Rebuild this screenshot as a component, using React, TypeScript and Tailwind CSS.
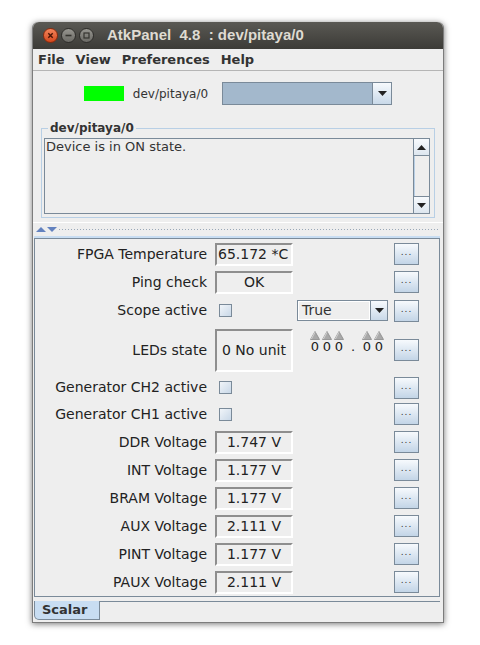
import React from "react";

const DotsButton = () => (
  <div className="w-[25px] h-[22px] border border-[#7a8a99] bg-gradient-to-b from-[#f7fafd] to-[#c3d5e7] flex items-center justify-center">
    <span className="text-[9px] leading-none text-[#333] tracking-[1px] -mt-[3px]">...</span>
  </div>
);

const Check = () => (
  <span className="block w-[13px] h-[13px] border border-[#7a8a99] bg-gradient-to-br from-[#f1f5f9] to-[#c9d8e8]" />
);

const ValueBox = ({
  children,
  align = "center",
  tall = false,
}: {
  children: React.ReactNode;
  align?: "center" | "left";
  tall?: boolean;
}) => (
  <div
    className={`w-[78px] ${tall ? "h-[43px]" : "h-[23px]"} overflow-hidden whitespace-nowrap border-t-2 border-l-2 border-b-2 border-r-2 border-t-[#8e8e8e] border-l-[#8e8e8e] border-b-white border-r-white bg-[#eeeeee] flex items-center text-[14px] text-[#222] ${
      align === "center" ? "justify-center" : "justify-start pl-[1px]"
    }`}
  >
    {children}
  </div>
);

const Triangle = () => (
  <svg width="10" height="9" viewBox="0 0 10 9">
    <polygon points="5,0.5 9.5,8.5 0.5,8.5" fill="#a9a9a9" stroke="#8a8a8a" strokeWidth="0.8" />
    <line x1="5" y1="1.2" x2="1.4" y2="8" stroke="#dadada" strokeWidth="0.9" />
  </svg>
);

const WheelDigit = ({ d }: { d: string }) => (
  <div className="w-[12px] flex flex-col items-center">
    <Triangle />
    <span className="text-[13px] leading-[14px] text-[#222]">{d}</span>
  </div>
);

type Row = {
  label: string;
  h: string;
  kind: "value" | "check" | "combo" | "leds";
  value?: string;
  align?: "center" | "left";
};

const rows: Row[] = [
  { label: "FPGA Temperature", h: "h-[28px]", kind: "value", value: "65.172 *C", align: "left" },
  { label: "Ping check", h: "h-[28px]", kind: "value", value: "OK" },
  { label: "Scope active", h: "h-[29px]", kind: "combo" },
  { label: "LEDs state", h: "h-[50px]", kind: "leds" },
  { label: "Generator CH2 active", h: "h-[25px]", kind: "check" },
  { label: "Generator CH1 active", h: "h-[28px]", kind: "check" },
  { label: "DDR Voltage", h: "h-[28px]", kind: "value", value: "1.747 V" },
  { label: "INT Voltage", h: "h-[28px]", kind: "value", value: "1.177 V" },
  { label: "BRAM Voltage", h: "h-[28px]", kind: "value", value: "1.177 V" },
  { label: "AUX Voltage", h: "h-[28px]", kind: "value", value: "2.111 V" },
  { label: "PINT Voltage", h: "h-[28px]", kind: "value", value: "1.177 V" },
  { label: "PAUX Voltage", h: "h-[28px]", kind: "value", value: "2.111 V" },
];

const AttrRow = ({ row }: { row: Row }) => (
  <div className={`flex items-center ${row.h}`}>
    <div className="w-[173px] text-right text-[14px] text-[#222] pr-[1px] whitespace-nowrap">{row.label}</div>
    <div className="ml-[7px] w-[78px] flex items-center">
      {row.kind === "value" && <ValueBox align={row.align}>{row.value}</ValueBox>}
      {row.kind === "leds" && (
        <ValueBox align="left" tall>
          <span className="pl-[4px]">0 No unit</span>
        </ValueBox>
      )}
      {(row.kind === "check" || row.kind === "combo") && (
        <div className="ml-[4px]">
          <Check />
        </div>
      )}
    </div>
    <div className="ml-[4px] w-[91px] self-stretch flex items-center">
      {row.kind === "combo" && (
        <div className="w-[91px] h-[21px] border border-[#7a8a99] bg-[#eeeeee] flex">
          <div className="flex-1 flex items-center pl-[3px] text-[14px] text-[#333] border border-white">True</div>
          <div className="w-[17px] border-l border-[#7a8a99] bg-gradient-to-b from-[#f7fafd] to-[#c9d9e9] flex items-center justify-center">
            <svg width="9" height="5" viewBox="0 0 9 5">
              <polygon points="0,0 9,0 4.5,5" fill="#222" />
            </svg>
          </div>
        </div>
      )}
      {row.kind === "leds" && (
        <div className="self-start mt-[6px] ml-[12px] flex items-end">
          <WheelDigit d="0" />
          <WheelDigit d="0" />
          <WheelDigit d="0" />
          <div className="w-[16px] text-center text-[13px] leading-[14px] text-[#222]">.</div>
          <WheelDigit d="0" />
          <WheelDigit d="0" />
        </div>
      )}
    </div>
    <div className="ml-[6px]">
      <DotsButton />
    </div>
  </div>
);

const TitleButton = ({ kind }: { kind: "close" | "min" | "max" }) => (
  <div
    className={`w-[15px] h-[15px] rounded-full flex items-center justify-center border ${
      kind === "close"
        ? "bg-gradient-to-b from-[#f4845a] to-[#d4471b] border-[#8c2a0c]"
        : "bg-gradient-to-b from-[#96958f] to-[#6b6a65] border-[#2e2d2a]"
    }`}
  >
    <svg width="9" height="9" viewBox="0 0 9 9">
      {kind === "close" && (
        <path d="M2.3 2.3 L6.7 6.7 M6.7 2.3 L2.3 6.7" stroke="#4a1505" strokeWidth="1.4" />
      )}
      {kind === "min" && <path d="M1.5 4.5 H7.5" stroke="#35342f" strokeWidth="1.6" />}
      {kind === "max" && <rect x="2" y="2" width="5" height="5" fill="none" stroke="#35342f" strokeWidth="1.2" />}
    </svg>
  </div>
);

const App = () => {
  return (
    <div className="w-[480px] h-[645px] bg-white pt-[22px] pl-[32px] font-['DejaVu_Sans',sans-serif]">
      <div className="w-[412px] h-[601px] flex flex-col bg-[#eeeeee] rounded-t-[6px] shadow-[0_1px_6px_rgba(0,0,0,0.55)] border-x border-b border-[#7c7c7c]">
        {/* title bar */}
        <div className="h-[27px] shrink-0 rounded-t-[6px] bg-gradient-to-b from-[#5a5954] to-[#3c3b37] flex items-center pl-[10px]">
          <div className="flex items-center gap-[3px]">
            <TitleButton kind="close" />
            <TitleButton kind="min" />
            <TitleButton kind="max" />
          </div>
          <span className="ml-[13px] text-[15px] font-bold text-[#dfdbd2] font-['Liberation_Sans',sans-serif] whitespace-pre">
            AtkPanel  4.8  : dev/pitaya/0
          </span>
        </div>
        {/* menu bar */}
        <div className="h-[22px] shrink-0 flex items-center pl-[5px] gap-[11px] text-[13px] font-bold text-[#333] border-b border-[#b5b5b5]">
          <span>File</span>
          <span>View</span>
          <span>Preferences</span>
          <span>Help</span>
        </div>
        {/* device status row */}
        <div className="mt-[11px] h-[23px] shrink-0 flex items-center justify-center">
          <div className="w-[40px] h-[15px] bg-[#00ff00]" />
          <span className="ml-[9px] text-[12px] text-[#333]">dev/pitaya/0</span>
          <div className="ml-[14px] w-[170px] h-[23px] border border-[#7a8a99] flex">
            <div className="flex-1 bg-[#a3b8cc]" />
            <div className="w-[19px] border-l border-[#7a8a99] bg-gradient-to-b from-[#f7fafd] to-[#c9d9e9] flex items-center justify-center">
              <svg width="9" height="5" viewBox="0 0 9 5">
                <polygon points="0,0 9,0 4.5,5" fill="#222" />
              </svg>
            </div>
          </div>
        </div>
        {/* status text */}
        <fieldset className="mt-[16px] mx-[8px] shrink-0 border border-[#b8cfe5] pl-[2px] pr-[4px] pt-[3px] pb-[3px]">
          <legend className="ml-[4px] px-[2px] text-[12px] leading-[14px] font-bold text-[#333]">dev/pitaya/0</legend>
          <div className="h-[76px] border border-[#7a8a99] flex">
            <div className="flex-1 pl-[1px] text-[13px] leading-[15px] text-[#333]">Device is in ON state.</div>
            <div className="w-[16px] border-l border-[#7a8a99] flex flex-col">
              <div className="h-[17px] border-b border-[#7a8a99] bg-gradient-to-b from-[#f7fafd] to-[#dde6ef] flex items-center justify-center">
                <svg width="9" height="5" viewBox="0 0 9 5">
                  <polygon points="0,5 9,5 4.5,0" fill="#222" />
                </svg>
              </div>
              <div className="flex-1 border-l border-[#b8cfe5] bg-[#eeeeee]" />
              <div className="h-[17px] border-t border-[#7a8a99] bg-gradient-to-b from-[#f7fafd] to-[#dde6ef] flex items-center justify-center">
                <svg width="9" height="5" viewBox="0 0 9 5">
                  <polygon points="0,0 9,0 4.5,5" fill="#222" />
                </svg>
              </div>
            </div>
          </div>
        </fieldset>
        {/* splitter */}
        <div className="mt-[4px] h-[14px] shrink-0 flex items-center pl-[3px] pr-[3px] border-t border-white">
          <svg width="10" height="5" viewBox="0 0 10 5">
            <polygon points="0,5 10,5 5,0" fill="#6382bf" />
          </svg>
          <svg width="10" height="5" viewBox="0 0 10 5" className="ml-[1px]">
            <polygon points="0,0 10,0 5,5" fill="#6382bf" />
          </svg>
          <div className="ml-[2px] flex-1 flex flex-col gap-[1px]">
            <div className="h-[1px] bg-[repeating-linear-gradient(90deg,#9aa8b8_0_1px,transparent_1px_3px)]" />
          </div>
        </div>
        {/* attribute panel */}
        <div className="ml-[1px] mr-[3px] shrink-0 border-t-2 border-[#c8ddf2] flex flex-col">
          <div className="h-[359px] border border-[#7a8a99] pt-[1px]">
            {rows.map((r) => (
              <AttrRow key={r.label} row={r} />
            ))}
          </div>
        </div>
        {/* tab row */}
        <div className="mt-[4px] h-[19px] shrink-0 flex ml-[1px] mr-[3px]">
          <div className="w-[66px] h-[19px] bg-[#c8ddf2] border-l border-b border-r border-[#7a8a99] rounded-bl-[5px] flex items-center pl-[7px] text-[13px] font-bold text-[#333]">
            Scalar
          </div>
          <div className="flex-1 border-t border-[#7a8a99]" />
        </div>
      </div>
    </div>
  );
};

export default App;
